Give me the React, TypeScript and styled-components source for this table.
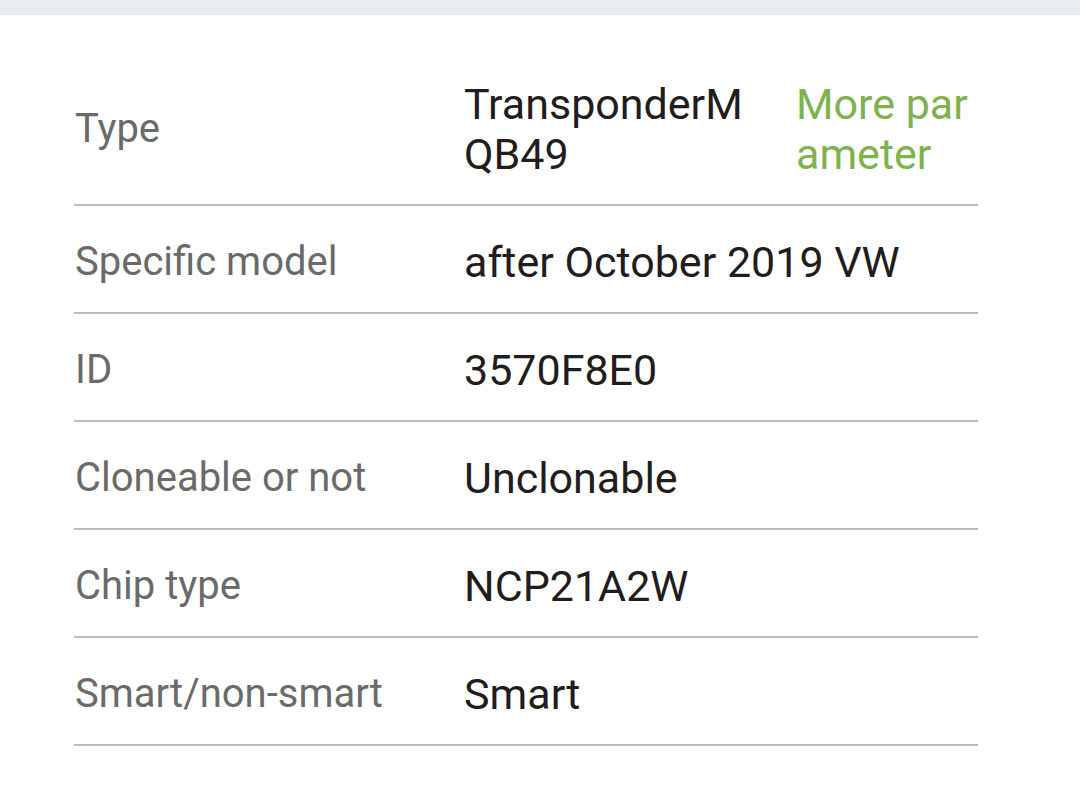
import React from 'react';
import styled, {createGlobalStyle} from 'styled-components';

const GlobalStyle = createGlobalStyle`
    html, body {
        margin: 0;
        padding: 0;
        background: #ffffff;
        font-family: Roboto, "Noto Sans", sans-serif;
    }
`;

type Param = {label: string; value: string; more?: string};

const params: Param[] = [
    {label: 'Type', value: 'TransponderMQB49', more: 'More parameter'},
    {label: 'Specific model', value: 'after October 2019 VW'},
    {label: 'ID', value: '3570F8E0'},
    {label: 'Cloneable or not', value: 'Unclonable'},
    {label: 'Chip type', value: 'NCP21A2W'},
    {label: 'Smart/non-smart', value: 'Smart'},
];

const App: React.FunctionComponent = () => {
    return (
        <>
            <GlobalStyle/>
            <Page>
                <TopBar/>
                <Table>
                    {params.map((p) => (
                        <Row key={p.label}>
                            <Label>{p.label}</Label>
                            <Value $wide={!p.more}>{p.value}</Value>
                            {p.more && <More>{p.more}</More>}
                        </Row>
                    ))}
                </Table>
            </Page>
        </>
    );
}

const Page = styled.div`
    width: 1080px;
    height: 810px;
    background: #ffffff;
    overflow: hidden;
`;

const TopBar = styled.div`
    height: 15px;
    background: #e9ecf1;
`;

const Table = styled.div`
    margin: 33px 102px 0 74px;
    display: flex;
    flex-direction: column;
`;

const Row = styled.div`
    display: grid;
    grid-template-columns: 390px 332px 182px;
    align-items: center;
    padding: 31px 0 25px;
    border-bottom: 2px solid #bdbdbd;
    line-height: 50px;
`;

const Label = styled.div`
    padding-left: 1px;
    font-size: 40px;
    color: #6a6a6a;
`;

const Value = styled.div<{$wide: boolean}>`
    font-size: 43px;
    color: #221c1c;
    word-break: break-all;
    padding-right: ${(p) => (p.$wide ? '0' : '30px')};
    grid-column: ${(p) => (p.$wide ? '2 / 4' : 'auto')};
`;

const More = styled.div`
    font-size: 43px;
    color: #7db24e;
    word-break: break-all;
    cursor: pointer;
`;

export default App;
